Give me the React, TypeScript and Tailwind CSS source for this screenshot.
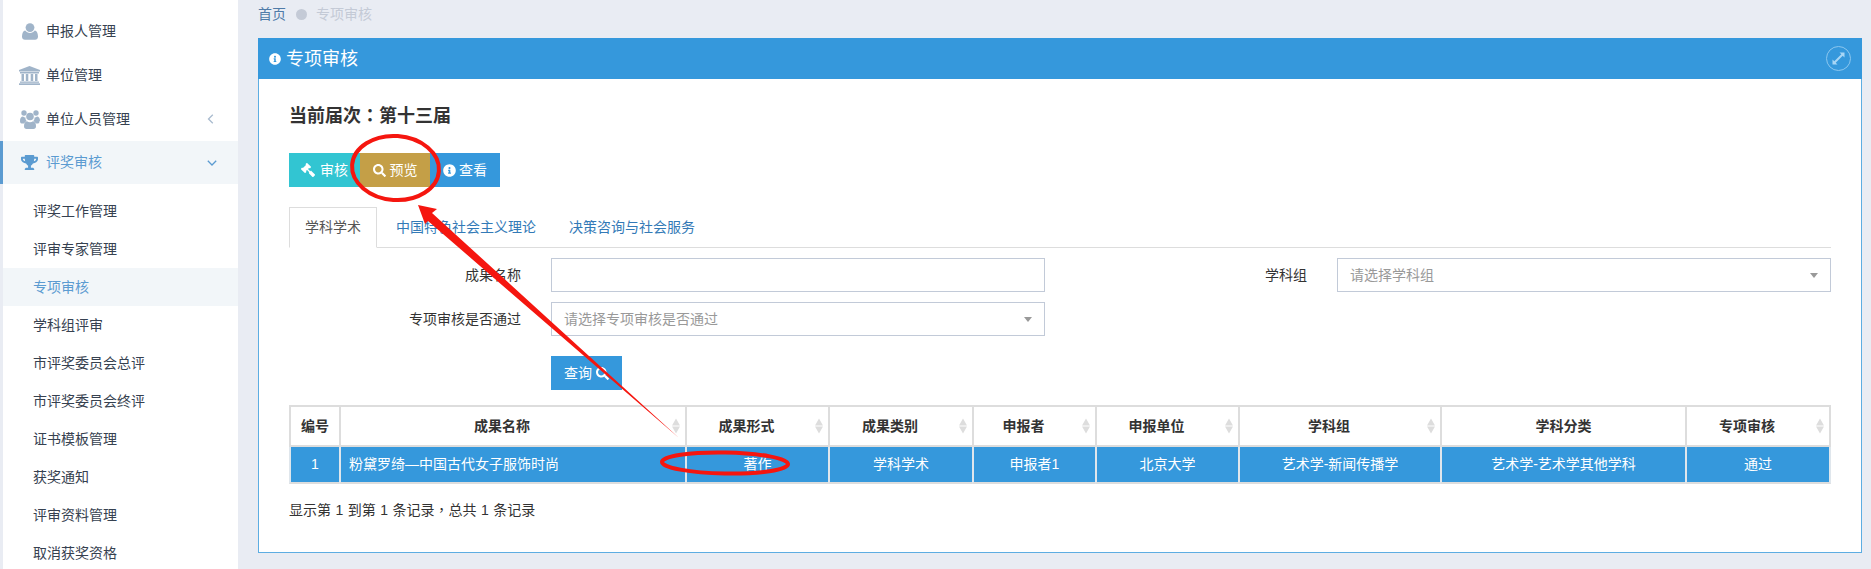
import React from "react";
import { FaGavel, FaSearch, FaInfoCircle, FaTrophy } from "react-icons/fa";

const UserIcon = () => (
  <svg width="16" height="17" viewBox="0 0 16 17" fill="#a0b4c9">
    <circle cx="8" cy="4.6" r="4.4" />
    <path d="M3.2 7.6C4.4 9.2 6 10 8 10s3.6-.8 4.8-2.4c2 .4 3 2.4 3.2 5.6.1 2.2-1 3.6-3 3.6H3c-2 0-3.100-1.400-3-3.600.2-3.200 1.200-5.200 3.200-5.600z" />
  </svg>
);
const BankIcon = () => (
  <svg width="21" height="19" viewBox="0 0 21 19" fill="#a0b4c9">
    <path d="M10.500 0L21 4v1.500H0V4z" />
    <rect x="1" y="6" width="19" height="1.500" />
    <rect x="2.500" y="8" width="2.500" height="7" />
    <rect x="6.800" y="8" width="2.500" height="7" />
    <rect x="11.700" y="8" width="2.500" height="7" />
    <rect x="16" y="8" width="2.500" height="7" />
    <rect x="1" y="15.500" width="19" height="1.300" />
    <rect x="0" y="17.300" width="21" height="1.700" />
  </svg>
);
const UsersIcon = () => (
  <svg width="20" height="19" viewBox="0 0 20 19" fill="#a0b4c9">
    <circle cx="4" cy="3" r="2.700" />
    <circle cx="16" cy="3" r="2.700" />
    <circle cx="10" cy="6.500" r="3.800" />
    <path d="M0 11c0-3 1.200-4.500 3-4.500 1 .8 1.600 1 2.500 1-.2 1.400.3 2.700 1.200 3.600-1 .6-2 1.300-2.500 2.400H1.500C.5 13.500 0 12.500 0 11z" />
    <path d="M20 11c0-3-1.200-4.500-3-4.500-1 .8-1.600 1-2.500 1 .2 1.400-.3 2.700-1.200 3.600 1 .6 2 1.300 2.500 2.400h2.200c1 0 1.500-1 1.500-2.500z" />
    <path d="M7 11.300c1.800 1.300 4.200 1.300 6 0 2 .4 3 2.200 3 5 0 1.700-1 2.700-2.500 2.700h-7C5 19 4 18 4 16.300c0-2.800 1-4.600 3-5z" />
  </svg>
);
const ExpandIcon = () => (
  <svg width="13" height="13" viewBox="0 0 13 13" fill="#a8d6f5">
    <path d="M7.500 .5H12.500V5.500L10.700 3.700 3.700 10.700 5.500 12.500H.5V7.500L2.300 9.300 9.300 2.300z" />
  </svg>
);
const ChevronLeft = () => (
  <svg width="7" height="10" viewBox="0 0 7 10" fill="none" stroke="#a9bbcf" strokeWidth="1.300">
    <path d="M5.800 .8L1.500 5l4.300 4.200" />
  </svg>
);
const ChevronDown = () => (
  <svg width="10" height="6" viewBox="0 0 10 6" fill="none" stroke="#5b9bd1" strokeWidth="1.300">
    <path d="M.8 .8L5 5l4.200-4.200" />
  </svg>
);
const Caret = () => (
  <span className="w-0 h-0 border-x-[4px] border-x-transparent border-t-[5px] border-t-[#999]" />
);
const Sort = () => (
  <span className="absolute right-[5px] top-1/2 -translate-y-1/2 flex flex-col gap-[1px]">
    <span className="w-0 h-0 border-x-[4px] border-x-transparent border-b-[7px] border-b-[#dddddd]" />
    <span className="w-0 h-0 border-x-[4px] border-x-transparent border-t-[7px] border-t-[#dddddd]" />
  </span>
);
const Punct = ({ children }: { children: React.ReactNode }) => (
  <span className="[font-family:'Noto_Sans_CJK_TC']">{children}</span>
);

const topMenu: [React.ReactNode, string, React.ReactNode][] = [
  [<UserIcon />, "申报人管理", null],
  [<BankIcon />, "单位管理", null],
  [<UsersIcon />, "单位人员管理", <ChevronLeft />],
];
const subMenu = ["评奖工作管理", "评审专家管理", "专项审核", "学科组评审", "市评奖委员会总评", "市评奖委员会终评", "证书模板管理", "获奖通知", "评审资料管理", "取消获奖资格"];

const heads: [string, number, boolean][] = [
  ["编号", 50, false],
  ["成果名称", 346, true],
  ["成果形式", 143, true],
  ["成果类别", 144, true],
  ["申报者", 123, true],
  ["申报单位", 143, true],
  ["学科组", 202, true],
  ["学科分类", 245, false],
  ["专项审核", 146, true],
];
const cells = ["1", "粉黛罗绮—中国古代女子服饰时尚", "著作", "学科学术", "申报者1", "北京大学", "艺术学-新闻传播学", "艺术学-艺术学其他学科", "通过"];

export default function App() {
  return (
    <div
      className="relative flex w-[1871px] h-[569px] overflow-hidden bg-[#e9ecf3] text-[14px] text-[#333]"
      style={{ fontFamily: '"Liberation Sans", "Noto Sans CJK SC", sans-serif' }}
    >
      <aside className="ml-[3px] w-[235px] h-[569px] shrink-0 bg-white pt-[9px] text-[#364150]">
        {topMenu.map(([icon, label, arrow]) => (
          <div key={label} className="flex items-center h-[44px]">
            <span className="w-[43px] pl-[10px] flex justify-center shrink-0">{icon}</span>
            <span>{label}</span>
            <span className="ml-auto mr-[24px] flex">{arrow}</span>
          </div>
        ))}
        <div className="relative -ml-[3px] flex items-center h-[43px] bg-[#f2f6f9] text-[#5b9bd1] border-l-[3px] border-l-[#5b9bd1]">
          <span className="w-[43px] pl-[10px] flex justify-center shrink-0">
            <FaTrophy size={17} color="#5b9bd1" />
          </span>
          <span>评奖审核</span>
          <span className="ml-auto mr-[21px] flex"><ChevronDown /></span>
        </div>
        <div className="pt-[8px]">
          {subMenu.map((s) => (
            <div
              key={s}
              className={"flex items-center h-[38px] pl-[30px] " + (s === "专项审核" ? "bg-[#f2f6f9] text-[#5b9bd1]" : "")}
            >
              {s}
            </div>
          ))}
        </div>
      </aside>

      <main className="flex-1 pl-[20px] pr-[9px]">
        <div className="flex items-center h-[28px] -mb-px">
          <span className="text-[#4f7ba8]">首页</span>
          <span className="w-[11px] h-[11px] rounded-full bg-[#c4cad6] ml-[10px] mr-[9px]" />
          <span className="text-[#c4cad6]">专项审核</span>
        </div>
        <section className="mt-[11px] h-[515px] border border-[#5dade2] bg-white">
          <header className="flex items-center h-[41px] -mt-px -mx-px bg-[#3598dc] text-white pl-[11px] pr-[11px]">
            <FaInfoCircle size={12} />
            <span className="ml-[5px] text-[18px] pt-[2px]">专项审核</span>
            <span className="ml-auto flex items-center justify-center w-[25px] h-[25px] rounded-full border border-[#8cc7ef]">
              <ExpandIcon />
            </span>
          </header>
          <div className="px-[30px] pt-[22px]">
            <h2 className="h-[26px] text-[18px] leading-[26px] font-bold text-[#333]">当前届次<Punct>：</Punct>第十三届</h2>

            <div className="flex mt-[26px] text-white">
              <button className="flex items-center justify-center gap-[5px] w-[71px] h-[34px] bg-[#32c5d2]">
                <FaGavel size={14} className="-scale-x-100" />审核
              </button>
              <button className="flex items-center justify-center gap-[4px] w-[70px] h-[34px] bg-[#c49f47]">
                <FaSearch size={13} />预览
              </button>
              <button className="flex items-center justify-center gap-[3px] w-[70px] h-[34px] bg-[#3598dc]">
                <FaInfoCircle size={13} />查看
              </button>
            </div>

            <div className="flex mt-[20px] h-[41px] border-b border-b-[#ddd] text-[#337ab7]">
              <div className="w-[88px] h-[41px] flex items-center justify-center border border-[#ddd] border-b-white bg-white text-[#555]">
                学科学术
              </div>
              <div className="ml-[19px] h-[40px] flex items-center">中国特色社会主义理论</div>
              <div className="ml-[33px] h-[40px] flex items-center">决策咨询与社会服务</div>
            </div>

            <div className="mt-[10px] grid grid-cols-[232px_494px_232px_494px] gap-x-[30px] gap-y-[10px] items-center">
              <label className="text-right">成果名称</label>
              <div className="h-[34px] border border-[#c2cad8]" />
              <label className="text-right">学科组</label>
              <div className="h-[34px] border border-[#c2cad8] flex items-center justify-between pl-[12px] pr-[12px] text-[#999]">
                请选择学科组<Caret />
              </div>
              <label className="text-right">专项审核是否通过</label>
              <div className="h-[34px] border border-[#c2cad8] flex items-center justify-between pl-[12px] pr-[12px] text-[#999]">
                请选择专项审核是否通过<Caret />
              </div>
            </div>

            <button className="mt-[20px] ml-[262px] flex items-center justify-center gap-[4px] w-[71px] h-[34px] bg-[#3598dc] text-white">
              查询<FaSearch size={13} />
            </button>

            <table className="mt-[15px] w-[1542px] table-fixed border-separate border-spacing-0">
              <colgroup>
                {heads.map(([h, w]) => <col key={h} style={{ width: w }} />)}
              </colgroup>
              <thead>
                <tr className="h-[42px]">
                  {heads.map(([h, , sort], i) => (
                    <th
                      key={h}
                      className={
                        "relative p-0 border-t-2 border-b-2 border-l-2 border-[#ddd] font-bold text-center " +
                        (sort ? "pr-[22px] " : "") +
                        (i === heads.length - 1 ? "border-r-2" : "")
                      }
                    >
                      {h}
                      {sort && <Sort />}
                    </th>
                  ))}
                </tr>
              </thead>
              <tbody>
                <tr className="h-[37px] bg-[#3598dc] text-white">
                  {cells.map((c, i) => (
                    <td
                      key={i}
                      className={
                        "p-0 border-l-2 border-l-[#dfe6ec] border-b-2 border-b-[#ddd] " +
                        (i === 1 ? "text-left pl-[8px] " : "text-center ") +
                        (i === cells.length - 1 ? "border-r-2 border-r-[#dfe6ec]" : "")
                      }
                    >
                      {c}
                    </td>
                  ))}
                </tr>
              </tbody>
            </table>

            <p className="mt-[15px] h-[20px] leading-[20px] [word-spacing:0.6px]">显示第 1 到第 1 条记录<Punct>，</Punct>总共 1 条记录</p>
          </div>
        </section>
      </main>

      <svg className="absolute left-0 top-0 pointer-events-none" width="1871" height="569" fill="none">
        <ellipse cx="395.500" cy="168" rx="43.500" ry="32" transform="rotate(4 395.500 168)" stroke="#f5160f" strokeWidth="4" />
        <ellipse cx="725" cy="463" rx="63" ry="10.500" transform="rotate(1 725 463)" stroke="#f5160f" strokeWidth="4" />
        <path d="M418 205L437 209L432 213L679 438L428 221L425 224Z" fill="#f5160f" />
      </svg>
    </div>
  );
}
